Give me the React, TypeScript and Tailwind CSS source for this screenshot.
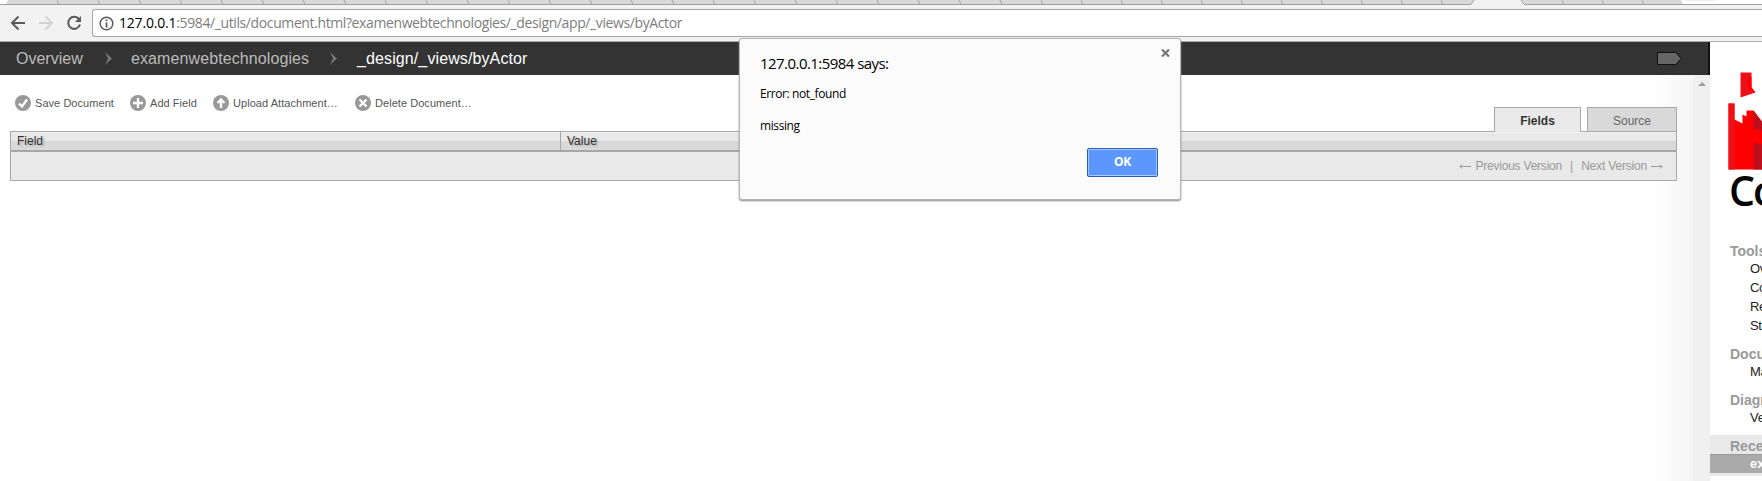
import React from "react";

const tabEdges = [
  59, 100, 141, 182, 223, 264, 305, 346, 387, 428, 469, 510, 551, 592, 633, 674, 715, 756, 797, 838, 879, 920, 961, 1002,
  1043, 1083, 1123, 1163, 1203, 1243, 1283, 1323, 1363, 1403, 1443, 1564, 1604, 1644,
];

function TabStrip() {
  return (
    <svg className="block h-[5px] w-full shrink-0" width="1762" height="5" viewBox="0 0 1762 5">
      <rect width="1762" height="5" fill="#fff" />
      <path d="M6 4L8 0H1474L1472 4Z M1523 4L1521 0H1681L1683 4Z" fill="#d9d9d9" />
      <path d="M1472 5L1474 0H1521L1523 5Z" fill="#f2f2f2" />
      <path d="M1686 0H1715" stroke="#ddd" />
      <path d={tabEdges.map((x) => `M${x} 4.5L${x - 2} 0`).join("")} stroke="#a6a6a6" fill="none" />
      <path d="M0 4.5H1471L1474 0M1521 0L1524 4.5H1762" stroke="#a0a0a0" fill="none" />
    </svg>
  );
}

function AddressBar() {
  return (
    <div className="flex h-[37px] shrink-0 items-start border-b border-[#adadad] bg-[#f2f2f2] pt-1">
      <svg className="mt-1 shrink-0" width="92" height="20" viewBox="0 0 92 20" fill="none" strokeWidth="2">
        <path d="M25 10H12.5M18.500 3.500L12 10L18.500 16.500" stroke="#5a5a5a" />
        <path d="M39 10H51.500M45.500 3.500L52 10L45.500 16.500" stroke="#d2d2d2" />
        <path d="M79 6.200A6 6 0 1 0 80 11.500" stroke="#5a5a5a" />
        <path d="M81 3V9H75Z" fill="#5a5a5a" />
      </svg>
      <div className="flex h-7 flex-1 items-center rounded-l-[3px] border border-r-0 border-[#a6a6a6] bg-white pl-[6px]">
        <svg width="15" height="15" viewBox="0 0 15 15" fill="none" stroke="#5a5a5a">
          <circle cx="7.500" cy="7.500" r="6.300" strokeWidth="1.500" />
          <path d="M7.500 3.500V5.200M7.500 6.500V11.500" strokeWidth="1.800" />
        </svg>
        <span className="ml-[5px] whitespace-pre font-['Open_Sans',sans-serif] text-[14px] leading-[26px] tracking-[-0.390px] text-[#7d7d7d]">
          <span className="tracking-[-0.200px] text-black">127.0.0.1</span>:5984/_utils/document.html?examenwebtechnologies/_design/app/_views/byActor
        </span>
      </div>
    </div>
  );
}

function Chevron() {
  return (
    <svg width="9" height="13" viewBox="0 0 9 13">
      <path d="M1 0L8 6.500L1 13L4 6.500Z" fill="#777" />
    </svg>
  );
}

function Breadcrumbs() {
  return (
    <div className="flex h-[33px] shrink-0 items-center border-r-2 border-[#111] bg-[#333] pl-4 pr-[26px] text-[16px] leading-[33px] text-[#bbb]">
      <span className="w-[88px]">Overview</span>
      <Chevron />
      <span className="ml-[18px] w-[198px] tracking-[0.100px]">examenwebtechnologies</span>
      <Chevron />
      <span className="ml-[19px] tracking-[0.110px] text-white">_design/_views/byActor</span>
      <svg className="ml-auto" width="25" height="13" viewBox="0 0 25 13">
        <path d="M.5 .5H19L24 6.500L19 12.500H.5Z" fill="#666" stroke="#111" />
      </svg>
    </div>
  );
}

function Action({ d, label, className }: { d: string; label: string; className: string }) {
  return (
    <div className={`flex shrink-0 items-center gap-[4px] ${className}`}>
      <svg width="16" height="16" viewBox="0 0 16 16">
        <circle cx="8" cy="8" r="8" fill="#999" />
        <path d={d} stroke="#fff" strokeWidth="2.300" fill="none" />
      </svg>
      <span className="whitespace-nowrap tracking-[0.050px]">{label}</span>
    </div>
  );
}

function DocumentPane() {
  return (
    <div className="flex flex-1">
      <div className="flex-1 bg-[linear-gradient(to_right,#fff_1650px,#f5f5f5_1693px)] pl-[10px] pr-4">
        <div className="flex h-[56px] items-start justify-between">
          <div className="flex pl-[5px] pt-5 text-[11px] leading-4 text-[#555]">
            <Action className="w-[115px]" label="Save Document" d="M4 8.500L7 11.500L12 4.500" />
            <Action className="w-[83px]" label="Add Field" d="M8 3V13M3 8H13" />
            <Action className="w-[142px]" label="Upload Attachment…" d="M8 13V5M4.500 8L8 4.500L11.500 8" />
            <Action className="w-[120px]" label="Delete Document…" d="M4.500 4.500L11.500 11.500M11.500 4.500L4.500 11.500" />
          </div>
          <div className="flex gap-[6px] pt-8 text-[12px] leading-[26px]">
            <div className="z-10 h-[25px] w-[87px] border border-b-0 border-[#a7a7a7] bg-[#e9e9e9] text-center font-bold text-[#333]">Fields</div>
            <div className="h-6 w-[90px] border border-b-0 border-[#a7a7a7] bg-[#d9d9d9] text-center text-[#666]">Source</div>
          </div>
        </div>
        <div className="h-[50px] border border-[#a7a7a7] bg-[#e9e9e9] text-[12px]">
          <div className="flex h-5 border-b-2 border-[#a7a7a7] bg-[linear-gradient(#f2f2f2_1px,#e9e9e9_1px,#e9e9e9_9px,#d9d9d9_9px)] leading-[18px] text-[#333] [text-shadow:2px_1px_2px_#aaa]">
            <div className="w-[550px] border-r border-[#a7a7a7] pl-[6px]">Field</div>
            <div className="pl-[6px]">Value</div>
          </div>
          <div className="flex h-[28px] items-center justify-end pr-[13px] leading-[28px] text-[#999]">
            <svg className="mt-px" width="12" height="5" viewBox="0 0 12 5" fill="none" stroke="#999"><path d="M12 2.500H1M3 .5L1 2.500L3 4.500" /></svg>
            <span className="ml-1 tracking-[-0.220px]">Previous Version</span>
            <span className="mx-2">|</span>
            <span className="mr-1 tracking-[-0.180px]">Next Version</span>
            <svg className="mt-px" width="12" height="5" viewBox="0 0 12 5" fill="none" stroke="#999"><path d="M0 2.500H11M9 .5L11 2.500L9 4.500" /></svg>
          </div>
        </div>
      </div>
      <div className="flex w-[17px] justify-center bg-[#f0f0f0] pt-[7px]">
        <svg width="8" height="4" viewBox="0 0 8 4"><path d="M4 0L8 4H0Z" fill="#a0a0a0" /></svg>
      </div>
    </div>
  );
}

function Heading({ children }: { children: React.ReactNode }) {
  return <div className="h-[17px] pl-[20px] text-[14px] font-bold leading-[19px] text-[#999]">{children}</div>;
}

function Item({ children }: { children: React.ReactNode }) {
  return <div className="pl-10 text-[13px] leading-[19px] tracking-[-0.300px] text-[#222]">{children}</div>;
}

function Sidebar() {
  return (
    <div className="w-[52px] shrink-0 overflow-hidden whitespace-nowrap bg-white">
      <svg className="block" width="52" height="128" viewBox="0 0 52 128">
        <g transform="translate(.5 .5)">
          <path d="M30 30H41V45L45 50L30 55Z" fill="#ed1018" />
          <path d="M37 37L41 34V45L45 50L37 46Z" fill="#f00" />
          <path d="M18 61H24V77L32 81V72L36 74V68H43L52 80V127H18Z" fill="#f00" />
          <path d="M18 61H24V127H18Z" fill="#ed1018" />
          <path d="M43 68L52 80V88L43 86ZM43 100L52 102V127H43Z" fill="#bd101c" />
        </g>
      </svg>
      <div className="h-[72px] pl-[19px] font-['Open_Sans',sans-serif] text-[41px] font-semibold leading-[40px] tracking-[-2px] text-black">CouchDB</div>
      <Heading>Tools</Heading>
      <Item>Overview</Item>
      <Item>Configuration</Item>
      <Item>Replicator</Item>
      <Item>Status</Item>
      <div className="mt-[10px]"><Heading>Documentation</Heading></div>
      <Item>Manual</Item>
      <div className="mt-[10px]"><Heading>Diagnostics</Heading></div>
      <Item>Verify Installation</Item>
      <div className="mt-2 border-b-[3px] border-[#e9e9e9] bg-[#e9e9e9] pt-[2px]">
        <Heading>Recent Databases</Heading>
        <div className="h-[19px] border-t border-[#999] bg-[#aaa] pl-10 text-[13px] font-bold leading-[18px] text-white">examenwebtechnologies</div>
      </div>
    </div>
  );
}

function AlertDialog() {
  return (
    <div className="absolute left-[739px] top-[38px] h-[162px] w-[442px] rounded-[3px] border border-[#b4b4b4] bg-[#fbfbfb] font-['Open_Sans',sans-serif] text-black shadow-[0_1px_2px_#888]">
      <div className="flex h-[36px] justify-between pl-5 pr-[10px]">
        <span className="mt-[13px] text-[15px] leading-[22px] tracking-[-0.550px]">127.0.0.1:5984 says:</span>
        <svg className="mt-[10px]" width="9" height="8" viewBox="0 0 9 8"><path d="M1 .5L8 7.500M8 .5L1 7.500" stroke="#777" strokeWidth="2.200" /></svg>
      </div>
      <div className="mt-[11px] pl-5 text-[12px] leading-4 tracking-[-0.400px]">
        <p>Error: not_found</p>
        <p className="mt-4">missing</p>
      </div>
      <div className="mt-[14px] flex justify-end pr-[22px]">
        <button className="h-[29px] w-[71px] rounded-[2px] border border-[#2a5db8] bg-[#5c97ff] pb-[2px] text-[12px] font-bold leading-[25px] tracking-[-0.300px] text-white shadow-[inset_0_0_0_1px_#a8caff]">OK</button>
      </div>
    </div>
  );
}

export default function App() {
  return (
    <div className="relative flex h-[481px] w-[1762px] flex-col overflow-hidden bg-white font-['Liberation_Sans',Arial,sans-serif]">
      <TabStrip />
      <AddressBar />
      <div className="flex min-h-0 flex-1">
        <div className="flex w-[1710px] shrink-0 flex-col">
          <Breadcrumbs />
          <DocumentPane />
        </div>
        <Sidebar />
      </div>
      <AlertDialog />
    </div>
  );
}
